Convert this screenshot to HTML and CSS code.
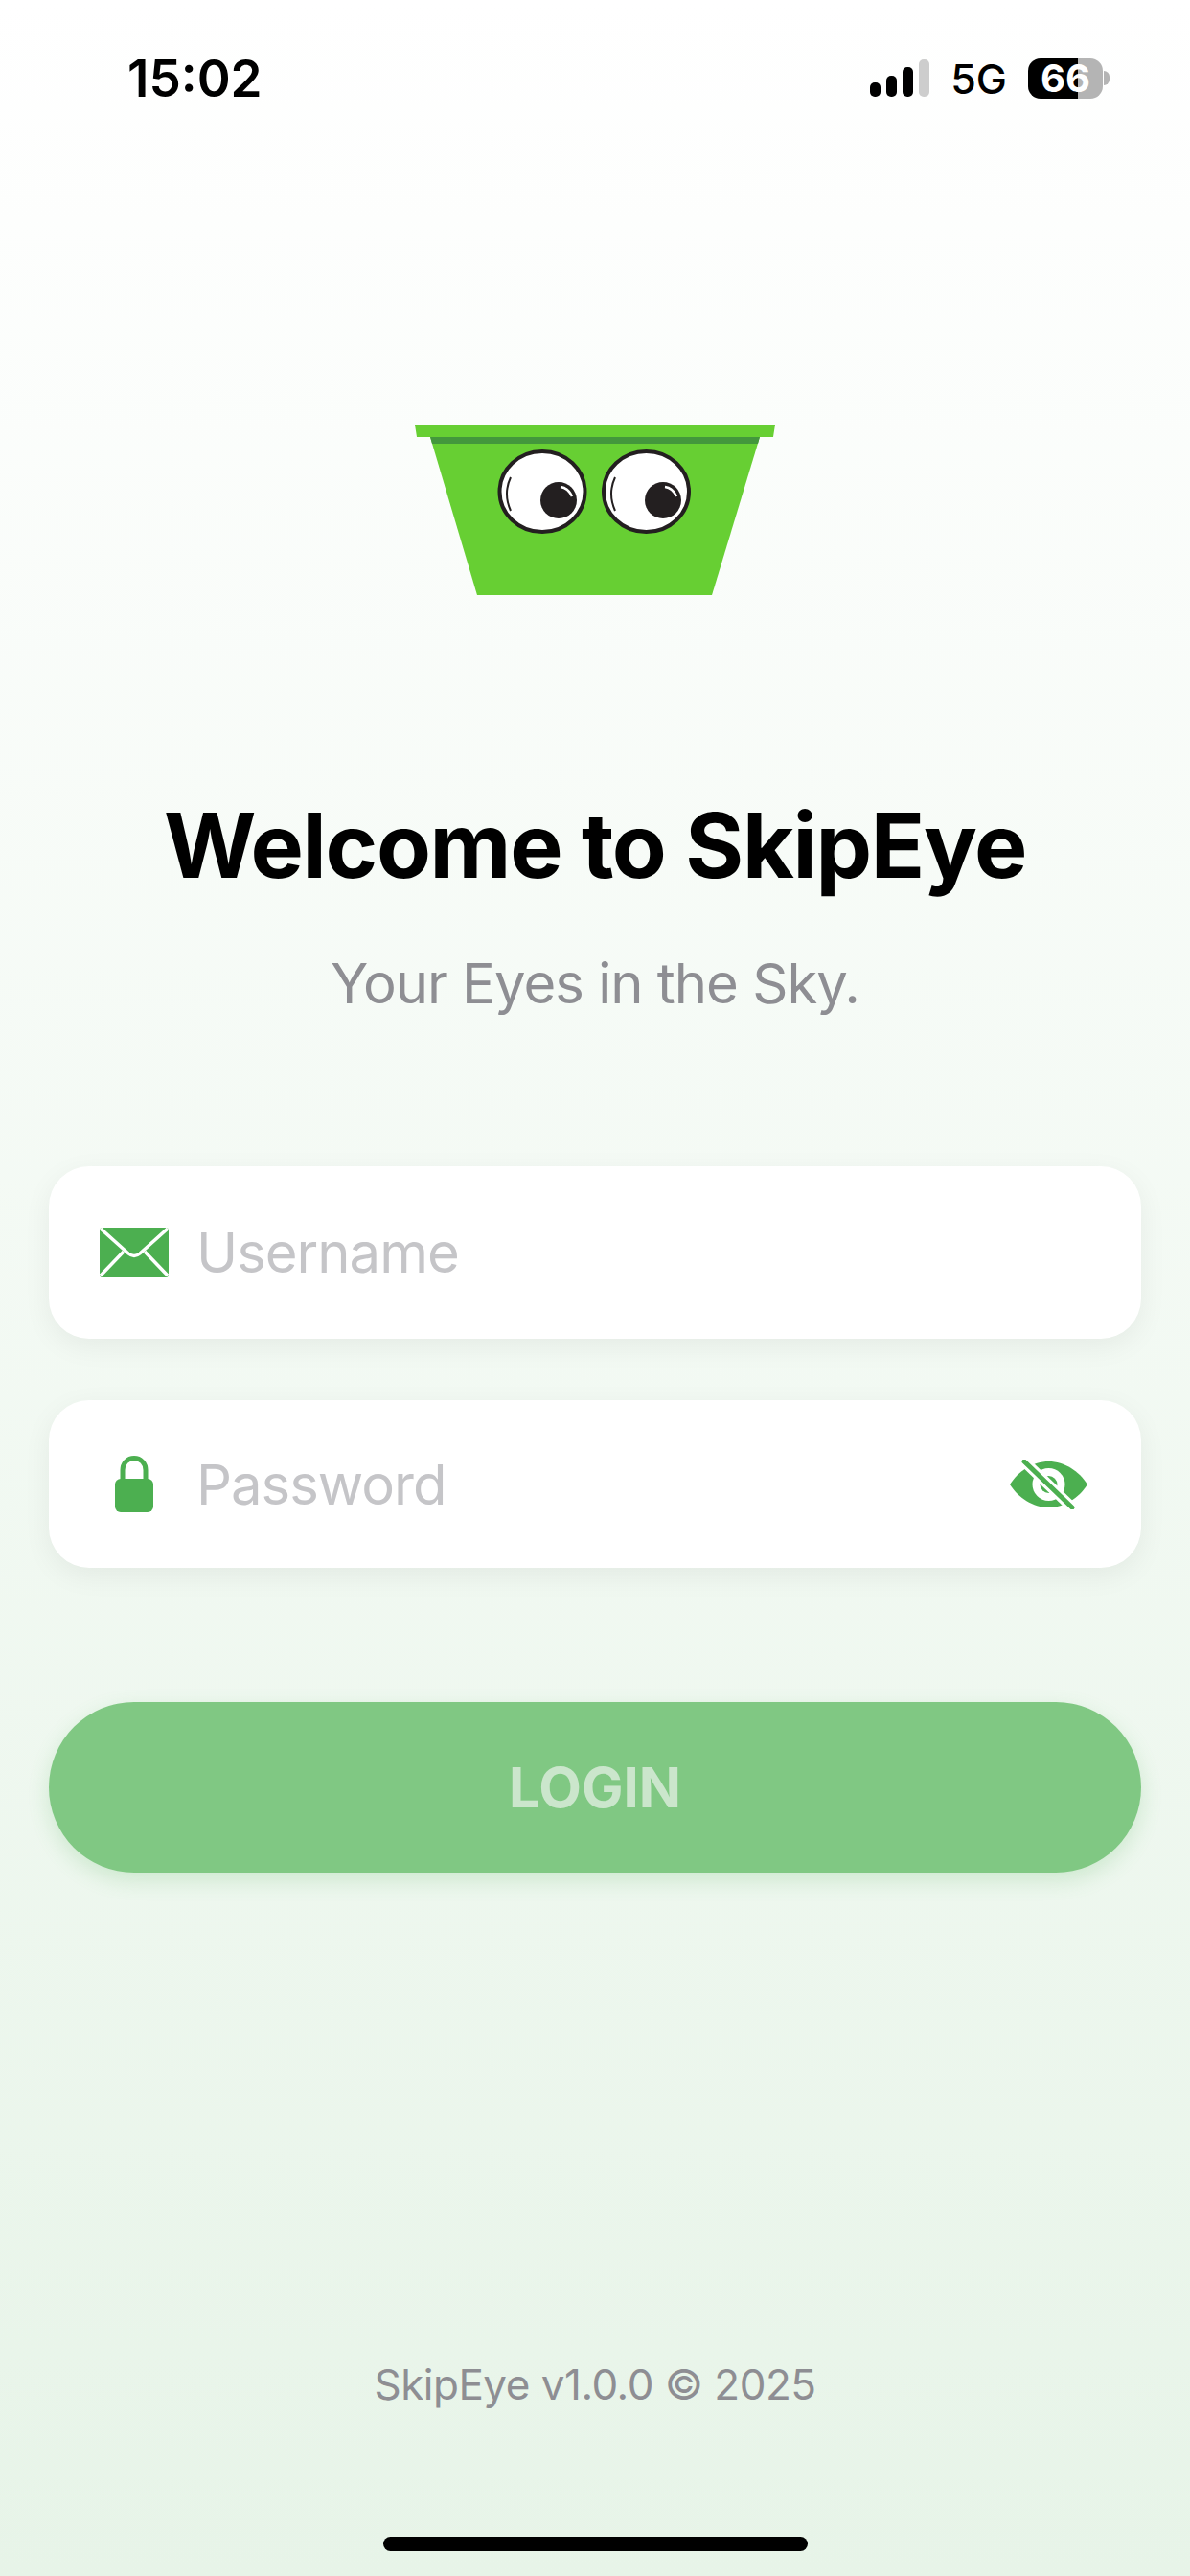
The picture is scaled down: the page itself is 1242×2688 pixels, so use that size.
FILE: index.html
```html
<!DOCTYPE html>
<html>
    <head>
        <meta charset="utf-8">
        <title>SkipEye</title>
        <link rel="stylesheet" href="styles.css">
    </head>
    <body>
        <div class="screen">
            <div class="statusbar">
                <span class="clock">15:02</span>
                <div class="status-icons">
                    <div class="signal">
                        <i class="bar1"></i><i class="bar2"></i><i class="bar3"></i><i class="bar4"></i>
                    </div>
                    <span class="network">5G</span>
                    <div class="battery">
                        <div class="battery-body"><span>66</span></div>
                        <div class="battery-tip"></div>
                    </div>
                </div>
            </div>

            <svg class="logo" width="376" height="178" viewBox="0 0 376 178">
                <!-- skip body, rim and the dark lip under it -->
                <polygon points="16,13 360,13 310,178 65,178" fill="#67cf33"/>
                <polygon points="0,0 376,0 374,13 2,13" fill="#67cf33"/>
                <polygon points="16,13 360,13 358,20 18,20" fill="#43973c"/>
                <!-- left eye -->
                <ellipse cx="133" cy="70" rx="44.5" ry="42" fill="#fff" stroke="#231f20" stroke-width="4"/>
                <circle cx="150" cy="79" r="19" fill="#231f20"/>
                <path d="M152 65 Q160 66 164 75" fill="none" stroke="#fff" stroke-width="2.500"/>
                <path d="M100 55 Q92 72 100 90" fill="none" stroke="#231f20" stroke-width="2"/>
                <!-- right eye -->
                <ellipse cx="241.500" cy="70" rx="44.5" ry="42" fill="#fff" stroke="#231f20" stroke-width="4"/>
                <circle cx="259" cy="79" r="19" fill="#231f20"/>
                <path d="M261 65 Q269 66 273 75" fill="none" stroke="#fff" stroke-width="2.500"/>
                <path d="M209 55 Q201 72 209 90" fill="none" stroke="#231f20" stroke-width="2"/>
            </svg>

            <h1 class="title">Welcome to SkipEye</h1>
            <p class="subtitle">Your Eyes in the Sky.</p>

            <form class="login-form">
                <div class="field field-user">
                    <span class="field-icon">
                        <svg width="72" height="52" viewBox="0 0 72 52">
                            <rect width="72" height="52" rx="3" fill="#4caf50"/>
                            <path d="M1 1L30 27Q36 32 42 27L71 1" fill="none" stroke="#fff" stroke-width="3.500"/>
                            <path d="M25 25L1 50M47 25L71 50" fill="none" stroke="#fff" stroke-width="3.500"/>
                        </svg>
                    </span>
                    <span class="placeholder">Username</span>
                </div>
                <div class="field field-pass">
                    <span class="field-icon">
                        <svg width="40" height="59" viewBox="0 0 40 59">
                            <path d="M8 26V15C8 8 13 2.500 20 2.500S32 8 32 15V26" fill="none" stroke="#4caf50" stroke-width="5"/>
                            <rect x="0" y="24" width="40" height="35" rx="6" fill="#4caf50"/>
                        </svg>
                    </span>
                    <span class="placeholder">Password</span>
                    <svg class="eye" width="81" height="52" viewBox="0 0 81 52">
                        <path fill="#4caf50" d="M0 26C9 12 24 2 40.500 2S72 12 81 26C72 40 57 50 40.500 50S9 40 0 26Z"/>
                        <circle cx="40.500" cy="26" r="17" fill="#fff"/>
                        <circle cx="40.500" cy="26" r="9" fill="#4caf50"/>
                        <path d="M14 1L66 51" stroke="#fff" stroke-width="11"/>
                        <path d="M15 2L65 50" stroke="#4caf50" stroke-width="5" stroke-linecap="round"/>
                    </svg>
                </div>
                <button class="login-btn" type="button">LOGIN</button>
            </form>

            <p class="version">SkipEye v1.0.0 © 2025</p>
            <div class="home-indicator"></div>
        </div>
    </body>
</html>
```

FILE: styles.css
```css
* {
    box-sizing: border-box;
}

body {
    margin: 0;
    font-family: Inter, "Liberation Sans", sans-serif;
}

.screen {
    width: 1242px;
    height: 2688px;
    overflow: hidden;
    display: flex;
    flex-direction: column;
    align-items: center;
    background: linear-gradient(180deg, #ffffff 0%, #e7f4e8 100%);
}

/* status bar */
.statusbar {
    width: 100%;
    height: 61px;
    margin-top: 51px;
    padding: 0 84px 0 133px;
    display: flex;
    justify-content: space-between;
    align-items: center;
}

.clock {
    font-size: 53px;
    font-weight: 600;
    color: #000;
}

.status-icons {
    display: flex;
    align-items: center;
}

.signal {
    display: flex;
    align-items: flex-end;
    gap: 6px;
    height: 39px;
    margin-right: 22px;
}

.signal i {
    display: block;
    width: 11px;
    border-radius: 5px;
    background: #000;
}

.signal .bar1 { height: 15px; }
.signal .bar2 { height: 22px; }
.signal .bar3 { height: 31px; }
.signal .bar4 { height: 39px; background: #cdcdcd; }

.network {
    font-size: 43px;
    font-weight: 500;
    color: #000;
    margin-right: 22px;
}

.battery {
    display: flex;
    align-items: center;
}

.battery-body {
    width: 78px;
    height: 42px;
    border-radius: 13px;
    background: linear-gradient(90deg, #000 0 52px, #b4b4b4 52px);
    display: flex;
    align-items: center;
    justify-content: center;
}

.battery-body span {
    font-size: 40px;
    font-weight: 700;
    color: #fff;
}

.battery-tip {
    width: 6px;
    height: 15px;
    margin-left: 1px;
    border-radius: 0 8px 8px 0;
    background: #b4b4b4;
}

/* branding */
.logo {
    display: block;
    margin-top: 331px;
    flex: none;
}

.title {
    margin: 0;
    margin-top: 207px;
    font-size: 93px;
    line-height: 108px;
    letter-spacing: -1.3px;
    font-weight: 700;
    color: #000;
}

.subtitle {
    margin: 55px 0 0;
    font-size: 58px;
    line-height: 70px;
    letter-spacing: -1px;
    color: #8e8e93;
}

/* form */
.login-form {
    width: 1140px;
    margin-top: 156px;
    display: flex;
    flex-direction: column;
}

.field {
    display: flex;
    align-items: center;
    background: #fff;
    border-radius: 42px;
    padding-right: 56px;
    box-shadow: 0 8px 30px rgba(0, 0, 0, 0.06);
}

.field-user {
    height: 180px;
}

.field-pass {
    height: 175px;
    margin-top: 64px;
}

.field-icon {
    width: 154px;
    padding-left: 24px;
    flex: none;
    display: flex;
    justify-content: center;
}

.field-icon svg {
    display: block;
}

.placeholder {
    flex: 1;
    font-size: 58px;
    letter-spacing: -1px;
    color: #c5c5c8;
}

.eye {
    display: block;
    flex: none;
}

.login-btn {
    display: block;
    width: 100%;
    height: 178px;
    margin-top: 140px;
    border: 0;
    border-radius: 89px;
    background: #80c883;
    box-shadow: 0 8px 22px rgba(76, 175, 80, 0.2);
    font-family: inherit;
    font-size: 58px;
    font-weight: 700;
    color: #cbe6cc;
}

/* footer */
.version {
    margin: auto 0 0;
    font-size: 44px;
    line-height: 50px;
    letter-spacing: -0.500px;
    color: #8e8e93;
}

.home-indicator {
    width: 443px;
    height: 15px;
    margin: 134px 0 26px;
    border-radius: 8px;
    background: #000;
    flex: none;
}
```
